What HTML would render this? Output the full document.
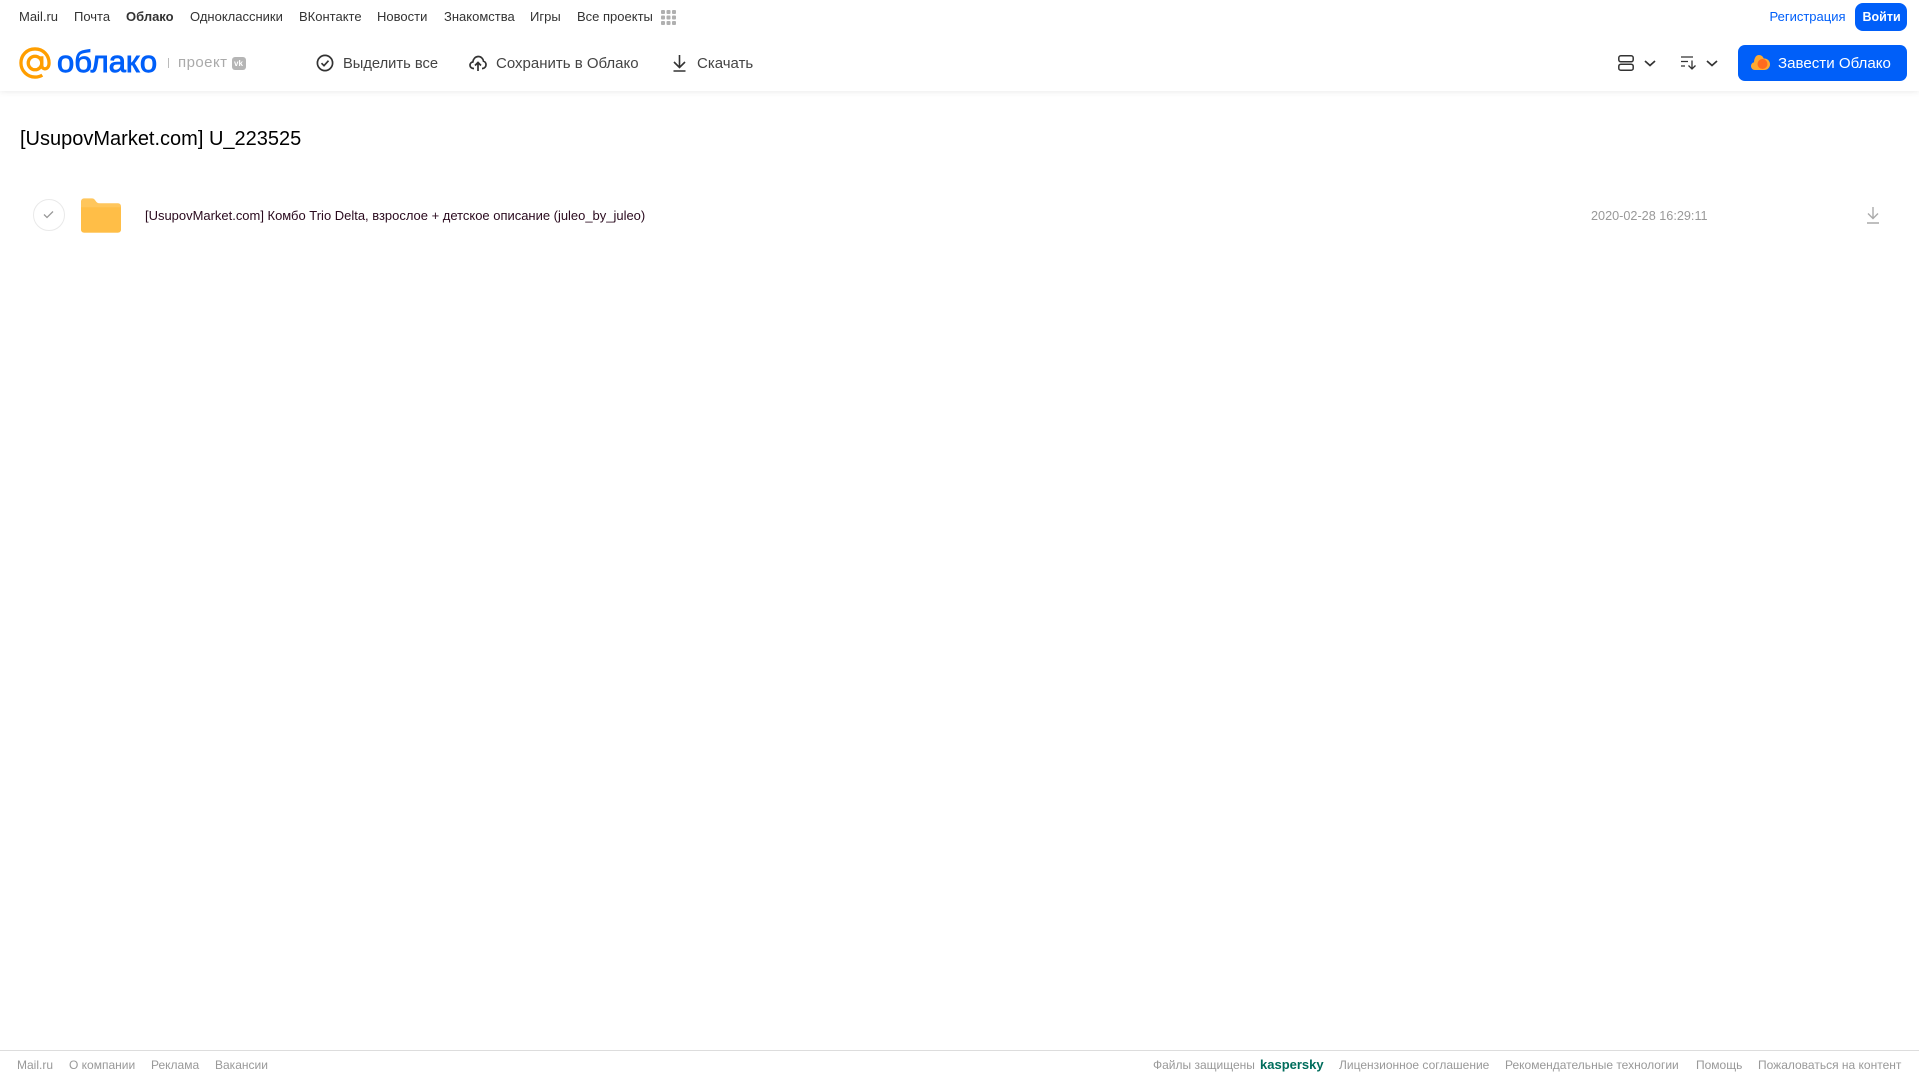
<!DOCTYPE html>
<html lang="ru">
<head>
<meta charset="utf-8">
<title>Облако</title>
<style>
html,body{margin:0;padding:0;width:1919px;height:1079px;overflow:hidden;background:#fff;font-family:"Liberation Sans",Arial,sans-serif}
.t{position:absolute;white-space:nowrap;line-height:16px}
.n{font-size:13px;color:#333;top:9px}
.a{font-size:14.9px;color:#444;top:55.500px}
.f{font-size:12px;color:#999;top:1057px}
svg{position:absolute;overflow:visible}
#shadow{position:absolute;left:0;top:0;width:1919px;height:91px;background:#fff;box-shadow:0 1px 6px rgba(0,0,0,.08)}
</style>
</head>
<body>
<div id="shadow"></div>

<span class="t n" style="left:19px">Mail.ru</span>
<span class="t n" style="left:74px">Почта</span>
<span class="t n" style="left:126px;font-weight:bold">Облако</span>
<span class="t n" style="left:190px">Одноклассники</span>
<span class="t n" style="left:299px">ВКонтакте</span>
<span class="t n" style="left:377px">Новости</span>
<span class="t n" style="left:444px">Знакомства</span>
<span class="t n" style="left:530px">Игры</span>
<span class="t n" style="left:577px">Все проекты</span>
<svg style="left:661px;top:10px" width="15" height="15" fill="#b0b0b0"><rect width="4" height="4" rx="1"/><rect x="5.500" width="4" height="4" rx="1"/><rect x="11" width="4" height="4" rx="1"/><rect y="5.500" width="4" height="4" rx="1"/><rect x="5.500" y="5.500" width="4" height="4" rx="1"/><rect x="11" y="5.500" width="4" height="4" rx="1"/><rect y="11" width="4" height="4" rx="1"/><rect x="5.500" y="11" width="4" height="4" rx="1"/><rect x="11" y="11" width="4" height="4" rx="1"/></svg>

<span class="t n" style="left:1769.500px;color:#005ff9">Регистрация</span>
<div style="position:absolute;left:1855px;top:3px;width:52px;height:28px;border-radius:8px;background:#005ff9"></div>
<span class="t n" style="left:1862.500px;color:#fff;font-weight:bold;font-size:12.500px">Войти</span>

<svg style="left:19px;top:47px" width="32" height="32" viewBox="0 0 33 33" fill="none" stroke="#ff9e00" stroke-width="3.400"><circle cx="16.500" cy="16.500" r="7"/><path d="M23.500 9.500v9.500c0 5 7.500 5 7.500-2.500C31 8.500 25 2 16.500 2S2 8.500 2 16.500 8.500 31 16.500 31c3 0 5.500-.7 7.500-2"/></svg>
<span class="t" style="left:57px;top:44px;font-size:31px;line-height:36px;color:#005ff9;-webkit-text-stroke:.9px #005ff9">облако</span>
<div style="position:absolute;left:168px;top:58px;width:1px;height:10px;background:#bbb"></div>
<span class="t" style="left:178px;top:55px;font-size:15px;color:#aaa;letter-spacing:.45px">проект</span>
<div style="position:absolute;left:232px;top:57px;width:14px;height:13px;background:#b5b5b5;border-radius:3px"></div>
<span class="t" style="left:234px;top:57px;font-size:8px;line-height:13px;font-weight:bold;color:#fff">vk</span>

<svg style="left:316px;top:54px" width="18" height="18" viewBox="0 0 18 18" fill="none" stroke="#333" stroke-width="1.700"><circle cx="9" cy="9" r="7.600"/><path d="M5.500 9.200l2.500 2.500 4.500-5"/></svg>
<span class="t a" style="left:343px;font-size:14.700px">Выделить все</span>
<svg style="left:469px;top:54px" width="18" height="18" viewBox="0 0 18 18" fill="none" stroke="#333" stroke-width="1.700"><path d="M5 14.500H4.500C2.500 14.500 1 13 1 11.200 1 9.500 2.200 8.200 3.800 8 4.200 4.800 6.400 2.500 9.300 2.500c2.700 0 4.800 2 5.200 4.700 1.500.4 2.500 1.900 2.500 3.500 0 2-1.500 3.800-3.500 3.800H13"/><path d="M9 17V9M6 11.500l3-3 3 3"/></svg>
<span class="t a" style="left:496px;font-size:15px">Сохранить в Облако</span>
<svg style="left:672px;top:54px" width="15" height="18" viewBox="0 0 15 18" fill="none" stroke="#333" stroke-width="1.600"><path d="M7.500 1v12M2 8l5.500 5.500L13 8M1.500 17h12"/></svg>
<span class="t a" style="left:697px;font-size:15px">Скачать</span>

<svg style="left:1618px;top:55px" width="16" height="16" viewBox="0 0 16 16" fill="none" stroke="#333" stroke-width="1.500"><rect x=".8" y=".8" width="14.400" height="6" rx="2"/><rect x=".8" y="9.200" width="14.400" height="6" rx="2"/></svg>
<svg style="left:1644px;top:60px" width="12" height="7" viewBox="0 0 12 7" fill="none" stroke="#333" stroke-width="1.700"><path d="M1 1l5 4.500L11 1"/></svg>
<svg style="left:1681px;top:56px" width="16" height="14" viewBox="0 0 16 14" fill="none" stroke="#333" stroke-width="1.300"><path d="M0 1h12M0 5.500h7M0 10h4M11 4.500V13M7.500 9.500L11 13l3.500-3.500"/></svg>
<svg style="left:1706px;top:60px" width="12" height="7" viewBox="0 0 12 7" fill="none" stroke="#333" stroke-width="1.700"><path d="M1 1l5 4.500L11 1"/></svg>

<div style="position:absolute;left:1738px;top:45px;width:169px;height:36px;border-radius:7px;background:#005ff9"></div>
<svg style="left:1751px;top:54px" width="19" height="17" viewBox="0 0 19 17"><path d="M4 16C1.800 16 0 14.300 0 12c0-1.900 1.300-3.400 3-3.800C3.300 4 5 1 8 1c2.300 0 4 1.500 4.700 3.500 3.300-.4 6.300 2.200 6.300 5.700 0 3.300-2.500 5.800-5.800 5.800z" fill="#ffa930"/><circle cx="11.500" cy="10" r="5" fill="#ff6a1f"/></svg>
<span class="t a" style="left:1778px;color:#fff;font-size:15.100px">Завести Облако</span>

<span class="t" style="left:20px;top:126.500px;font-size:20px;line-height:24px;color:#000">[UsupovMarket.com] U_223525</span>

<div style="position:absolute;left:33px;top:199px;width:30px;height:30px;border:1px solid #e9e9e9;border-radius:50%"></div>
<svg style="left:43px;top:210px" width="11" height="9" viewBox="0 0 11 9" fill="none" stroke="#999" stroke-width="1.300"><path d="M1 4.500l3 3 6-6"/></svg>
<svg style="left:81px;top:198px" width="40" height="35" viewBox="0 0 41 35"><path d="M0 3a3 3 0 0 1 3-3h8c2 0 3 1 4 2.500S17 5 19 5h19a3 3 0 0 1 3 3v24a3 3 0 0 1-3 3H3a3 3 0 0 1-3-3z" fill="#ffc65c"/><path d="M0 9h41v23a3 3 0 0 1-3 3H3a3 3 0 0 1-3-3z" fill="#ffbe47"/></svg>
<span class="t" style="left:145px;top:208px;font-size:12.980px;color:#2a0a1e">[UsupovMarket.com] Комбо Trio Delta, взрослое + детское описание (juleo_by_juleo)</span>
<span class="t" style="left:1591px;top:207.500px;font-size:12.670px;color:#999">2020-02-28 16:29:11</span>
<svg style="left:1866px;top:206px" width="14" height="18" viewBox="0 0 14 18" fill="none" stroke="#aaa" stroke-width="1.400"><path d="M7 1v11M2 7.500L7 12.500l5-5M1 17h12"/></svg>

<div style="position:absolute;left:0;top:1050px;width:1919px;height:1px;background:#ddd"></div>
<span class="t f" style="left:17px">Mail.ru</span>
<span class="t f" style="left:69px">О компании</span>
<span class="t f" style="left:151px">Реклама</span>
<span class="t f" style="left:215px">Вакансии</span>
<span class="t f" style="left:1153px">Файлы защищены</span>
<span class="t f" style="left:1260px;color:#006d5c;font-weight:bold;font-size:13px">kaspersky</span>
<span class="t f" style="left:1339px">Лицензионное соглашение</span>
<span class="t f" style="left:1505px">Рекомендательные технологии</span>
<span class="t f" style="left:1696px">Помощь</span>
<span class="t f" style="left:1758px">Пожаловаться на контент</span>
</body>
</html>
